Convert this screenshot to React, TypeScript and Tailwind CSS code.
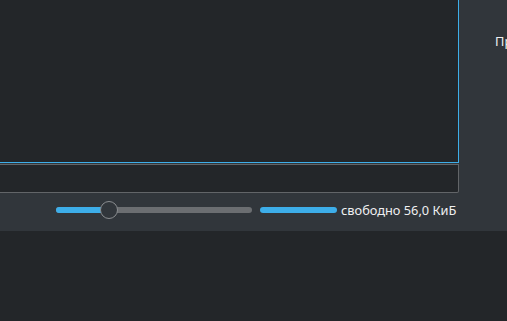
import React from "react"

function ZoomSlider({ value }: { value: number }) {
    // value in 0..1, track 196px wide
    const pos = Math.round(value * 196)
    return (
        <div className="relative w-[196px] h-[18px] flex items-center">
            <div className="w-full h-[6px] rounded-full bg-[#6b6e71]" />
            <div className="absolute left-0 h-[6px] rounded-full bg-[#3daee9]" style={{ width: pos }} />
            <div
                className="absolute top-0 w-[18px] h-[18px] rounded-full border border-[#8a8d90] bg-[#31363b]"
                style={{ left: pos - 9 }}
            />
        </div>
    )
}

export default function App() {
    return (
        <div
            className="w-[507px] h-[321px] bg-[#232629] flex flex-col overflow-hidden"
            style={{ fontFamily: '"Noto Sans", "DejaVu Sans", sans-serif' }}
        >
            <div className="h-[231px] bg-[#31363b] flex">
                <div className="w-[459px] shrink-0 flex flex-col">
                    <div className="h-[163px] bg-[#232629] border-r border-b border-r-[#3daee9] border-b-[#3daee9]" />
                    <div className="mt-[1px] h-[29px] bg-[#232629] border-r border-b border-t border-[#626568] rounded-br-[2px]" />
                    <div className="flex items-center h-[33px] pl-[56px] pt-[1px]">
                        <ZoomSlider value={0.27} />
                        <div className="ml-[8px] w-[77px] h-[6px] rounded-full bg-[#3daee9]" />
                        <span className="ml-[4px] text-[12.8px] text-[#eff0f1] leading-none whitespace-nowrap">свободно 56,0 КиБ</span>
                    </div>
                </div>
                <div className="flex-1 min-w-0 pl-[36px] pt-[28px]">
                    <span className="text-[12.8px] text-[#eff0f1] whitespace-nowrap">Пр</span>
                </div>
            </div>
        </div>
    )
}
